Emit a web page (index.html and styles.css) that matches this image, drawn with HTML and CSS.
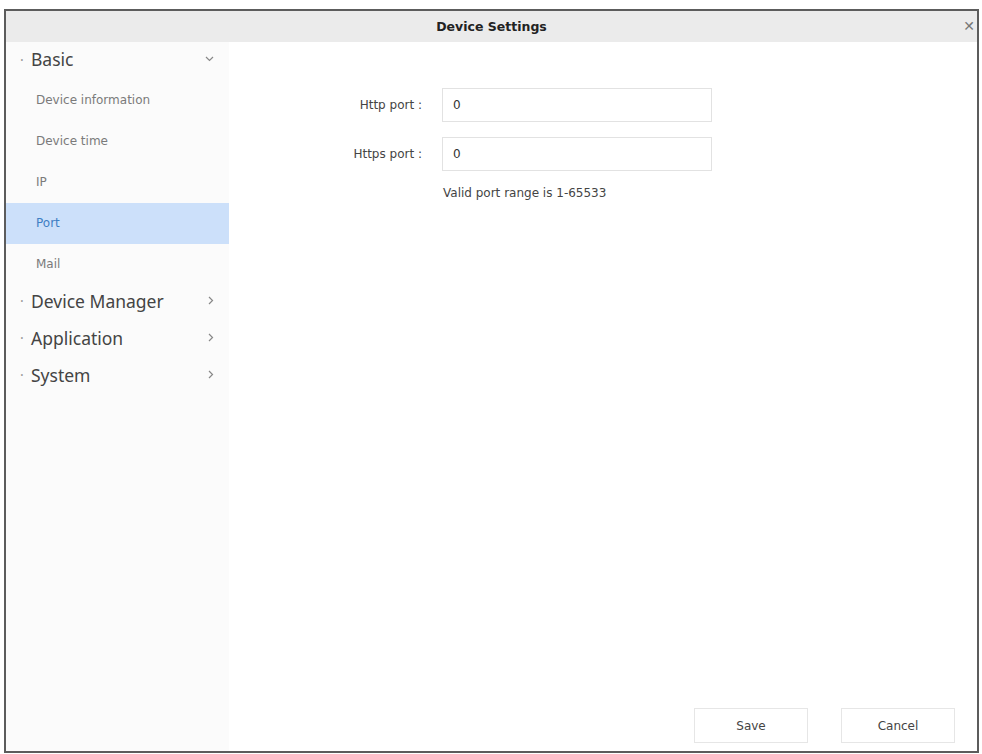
FILE: index.html
```html
<!DOCTYPE html>
<html>
<head>
<link rel="stylesheet" href="styles.css">
</head>
<body>

<div class="dialog">
  <div class="titlebar">
    <span class="title">Device Settings</span>
    <span class="close">&#x2715;</span>
  </div>

  <div class="content">
    <div class="menu">
      <div class="group open">
        <span class="dot">&middot;</span>Basic
        <svg class="arrow" width="9" height="6" viewBox="0 0 9 6"><path d="M1 1 L4.5 4.5 L8 1" fill="none" stroke="#888" stroke-width="1.2"/></svg>
      </div>
      <div class="item">Device information</div>
      <div class="item">Device time</div>
      <div class="item">IP</div>
      <div class="item active">Port</div>
      <div class="item last">Mail</div>
      <div class="group">
        <span class="dot">&middot;</span>Device Manager
        <svg class="arrow" width="6" height="9" viewBox="0 0 6 9"><path d="M1 1 L4.5 4.5 L1 8" fill="none" stroke="#888" stroke-width="1.2"/></svg>
      </div>
      <div class="group">
        <span class="dot">&middot;</span>Application
        <svg class="arrow" width="6" height="9" viewBox="0 0 6 9"><path d="M1 1 L4.5 4.5 L1 8" fill="none" stroke="#888" stroke-width="1.2"/></svg>
      </div>
      <div class="group">
        <span class="dot">&middot;</span>System
        <svg class="arrow" width="6" height="9" viewBox="0 0 6 9"><path d="M1 1 L4.5 4.5 L1 8" fill="none" stroke="#888" stroke-width="1.2"/></svg>
      </div>
    </div>

    <div class="main">
      <div class="form">
        <div class="row">
          <label>Http port :</label>
          <div class="field">0</div>
        </div>
        <div class="row">
          <label>Https port :</label>
          <div class="field">0</div>
        </div>
        <div class="row hint">
          <label></label>
          <span>Valid port range is 1-65533</span>
        </div>
      </div>

      <div class="buttons">
        <button>Save</button>
        <button>Cancel</button>
      </div>
    </div>
  </div>
</div>

</body>
</html>
```

FILE: styles.css
```css
body {
    margin: 0;
    font-family: "DejaVu Sans", "Noto Sans", sans-serif;
    background: #fff;
    color: #333;
}

/* dialog frame */
.dialog {
    margin: 9px 0 0 4px;
    width: 971px;
    height: 740px;
    border: 2px solid #5c5c5c;
    display: flex;
    flex-direction: column;
}

.titlebar {
    height: 31px;
    background-color: #ebebeb;
    display: flex;
    align-items: center;
    justify-content: center;
    position: relative;
}

.title {
    font-size: 12.5px;
    font-weight: bold;
    color: #222;
}

.close {
    position: absolute;
    right: 2px;
    top: 7px;
    font-size: 14px;
    color: #777;
}

.content {
    flex: 1;
    display: flex;
}

/* left menu */
.menu {
    width: 223px;
    background-color: #fbfbfb;
}

.group {
    display: flex;
    align-items: center;
    height: 37px;
    padding-left: 14px;
    padding-right: 12px;
    font-family: "Noto Sans", sans-serif;
    font-size: 17.5px;
    color: #444;
}

.group.open {
    height: 34px;
    margin-bottom: 4px;
}

.dot {
    width: 11px;
    color: #999;
    font-size: 14px;
}

.arrow {
    margin-left: auto;
    margin-right: 3px;
}

.item {
    height: 41px;
    line-height: 41px;
    padding-left: 30px;
    font-size: 12px;
    color: #7a7a7a;
}

.item.last {
    height: 38px;
}

.item.active {
    background-color: #cce0fa;
    color: #3f7fc4;
}

/* main area */
.main {
    flex: 1;
    display: flex;
    flex-direction: column;
    background-color: #fff;
}

.form {
    padding-top: 46px;
    display: flex;
    flex-direction: column;
    gap: 15px;
}

.row {
    display: flex;
    align-items: center;
}

.row label {
    width: 193px;
    text-align: right;
    font-size: 12px;
    color: #444;
}

.field {
    margin-left: 20px;
    width: 258px;
    height: 32px;
    line-height: 32px;
    padding-left: 10px;
    border: 1px solid #e2e2e2;
    font-size: 12px;
    color: #333;
}

.row.hint span {
    margin-left: 21px;
    font-size: 12px;
    color: #444;
}

.buttons {
    margin-top: auto;
    display: flex;
    justify-content: flex-end;
    gap: 33px;
    padding: 0 22px 8px 0;
}

.buttons button {
    width: 114px;
    height: 35px;
    background-color: #fff;
    border: 1px solid #e6e6e6;
    font-family: "DejaVu Sans", "Noto Sans", sans-serif;
    font-size: 12px;
    color: #444;
}
```
